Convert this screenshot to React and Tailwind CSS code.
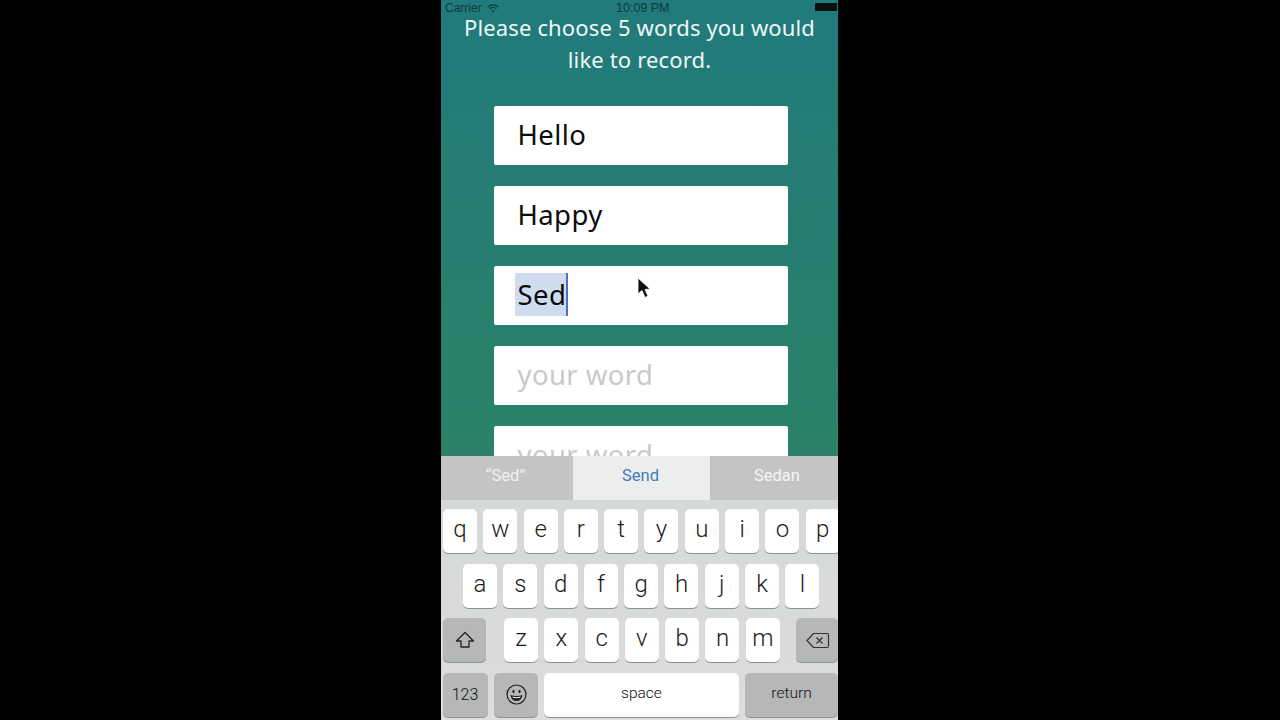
function Key({ c, w = "w-[34px]", gray = false, children }) {
  return (
    <div className={`${w} h-[44px] shrink-0 rounded-[5px] flex items-center justify-center shadow-[0_1px_0_#8f9392] ${gray ? "bg-[#b5b8b7]" : "bg-white"} text-[#1a1a1a] font-['Roboto',sans-serif]`}>
      {c ? <span className="text-[24px] font-light leading-none pb-[4px]">{c}</span> : children}
    </div>
  );
}

function Row({ keys }) {
  return (
    <div className="flex gap-[6.3px]">
      {keys.map((k) => (
        <Key key={k} c={k} />
      ))}
    </div>
  );
}

function Field({ children, extra = "" }) {
  return (
    <div className={`w-[294px] h-[59px] shrink-0 bg-white rounded-[2px] flex items-center pl-[24px] pb-[2px] text-[27.5px] font-['Noto_Sans',sans-serif] tracking-[0.4px] ${extra}`}>
      {children}
    </div>
  );
}

export default function App() {
  return (
    <div className="w-[1280px] h-[720px] bg-black flex justify-center overflow-hidden pr-[1px]">
      <div className="w-[397px] h-[720px] flex flex-col overflow-hidden">
        <div className="h-[456px] overflow-hidden bg-gradient-to-b from-[#217a7b] to-[#2b8268] flex flex-col items-center">
          <div className="w-full h-[14px] shrink-0 flex items-center justify-between pl-[4px] pr-[1px] pt-[2px] text-[12px] text-[#0f3a39] font-['Liberation_Sans',sans-serif] relative">
            <div className="flex items-center gap-[5px]">
              <span>Carrier</span>
              <svg width="12" height="9" viewBox="0 0 12 9" fill="none" stroke="#0f3a39" strokeWidth="1.2">
                <path d="M0.8 3 Q6 -1.2 11.2 3" />
                <path d="M2.6 4.8 Q6 2 9.4 4.8" />
                <path d="M6 8.2 L4.4 6.5 Q6 5.3 7.6 6.5 Z" fill="#0f3a39" stroke="none" />
              </svg>
            </div>
            <span className="absolute left-[175px] top-[1px] leading-[14px] text-[12.5px]">10:09 PM</span>
            <div className="w-[22px] h-[8px] bg-[#0b0f0f] rounded-[1px] mt-[-2px]" />
          </div>
          <h1 className="w-[370px] mt-[-3px] text-center text-[22px] leading-[32px] font-normal text-[#eef7f5] font-['Noto_Sans',sans-serif] tracking-[0.15px] shrink-0">
            Please choose 5 words you would like to record.
          </h1>
          <div className="mt-[31px] flex flex-col gap-[21px] pl-[1px] ml-[1px]">
            <Field><span className="text-[#0c0c0c]">Hello</span></Field>
            <Field><span className="text-[#0c0c0c]">Happy</span></Field>
            <Field extra="relative">
              <span className="text-[#0c0c0c] bg-[#cfdcee] ml-[-3px] pl-[3px] leading-[43px] border-r-2 border-[#4f6fc4]">Sed</span>
              <svg className="absolute left-[143px] top-[11px]" width="14" height="24" viewBox="0 0 14 24">
                <path d="M1 1 L1 17 L5 13.5 L8 20.5 L11 19 L8 12.5 L13 12 Z" fill="#111" stroke="#fff" strokeWidth="0.8" />
              </svg>
            </Field>
            <Field><span className="text-[#c9c9c9]">your word</span></Field>
            <Field><span className="text-[#c9c9c9]">your word</span></Field>
          </div>
        </div>

        <div className="flex-1 flex flex-col bg-gradient-to-b from-[#d3d8d7] to-[#dcdddc] font-['Roboto',sans-serif]">
          <div className="h-[44px] shrink-0 flex text-[16.5px] font-normal">
            <div className="w-[132px] bg-[#c3c5c4] text-[#f0f0f0] flex items-center justify-center pr-[3px] pb-[4px]">“Sed”</div>
            <div className="w-[137px] bg-[#eceeed] text-[#3f7ac2] flex items-center justify-center pr-[2px] pb-[4px]">Send</div>
            <div className="flex-1 bg-[#c3c5c4] text-[#f4f4f4] flex items-center justify-center pl-[6px] pb-[4px]">Sedan</div>
          </div>
          <div className="mt-[9px] flex flex-col gap-[10.6px]">
            <div className="pl-[2px]">
              <Row keys={["q", "w", "e", "r", "t", "y", "u", "i", "o", "p"]} />
            </div>
            <div className="pl-[22px]">
              <Row keys={["a", "s", "d", "f", "g", "h", "j", "k", "l"]} />
            </div>
            <div className="flex pl-[2px]">
              <Key w="w-[43px]" gray>
                <svg width="20" height="18" viewBox="0 0 20 18" fill="none" stroke="#222" strokeWidth="1.3" strokeLinejoin="round">
                  <path d="M10 1.5 L18.5 10 H14 V16 H6 V10 H1.5 Z" />
                </svg>
              </Key>
              <div className="ml-[18px]">
                <Row keys={["z", "x", "c", "v", "b", "n", "m"]} />
              </div>
              <div className="ml-[16px]">
                <Key w="w-[42px]" gray>
                  <svg className="ml-[3px]" width="24" height="17" viewBox="0 0 24 17" fill="none" stroke="#333" strokeWidth="1.2" strokeLinejoin="round">
                    <path d="M7.5 1.5 H21 Q22.5 1.5 22.5 3 V14 Q22.5 15.5 21 15.5 H7.5 L1 8.5 Z" />
                    <path d="M10.5 5.5 L16.5 11.5 M16.5 5.5 L10.5 11.5" />
                  </svg>
                </Key>
              </div>
            </div>
            <div className="flex pl-[2px] gap-[6px]">
              <Key w="w-[45px]" gray><span className="text-[16px] font-light pr-[1px] text-[#111]">123</span></Key>
              <Key w="w-[44px]" gray>
                <svg width="21" height="21" viewBox="0 0 21 21" fill="none" stroke="#222" strokeWidth="1.2">
                  <circle cx="10.5" cy="10.5" r="9.5" />
                  <ellipse cx="7.5" cy="7.5" rx="1.1" ry="1.8" fill="#222" stroke="none" />
                  <ellipse cx="13.5" cy="7.5" rx="1.1" ry="1.8" fill="#222" stroke="none" />
                  <path d="M4.5 11 Q10.5 13 16.5 11 Q15.5 17 10.5 17 Q5.5 17 4.5 11 Z" fill="#222" stroke="none" />
                  <path d="M6.5 12.6 Q10.5 13.8 14.5 12.6 L14 13.8 Q10.5 14.6 7 13.8 Z" fill="#fff" stroke="none" />
                </svg>
              </Key>
              <Key w="w-[195px]"><span className="text-[15.5px] font-light text-[#111] pb-[2px]">space</span></Key>
              <Key w="w-[93px]" gray><span className="text-[15.5px] font-light text-[#111] pb-[2px]">return</span></Key>
            </div>
          </div>
        </div>
      </div>
    </div>
  );
}
